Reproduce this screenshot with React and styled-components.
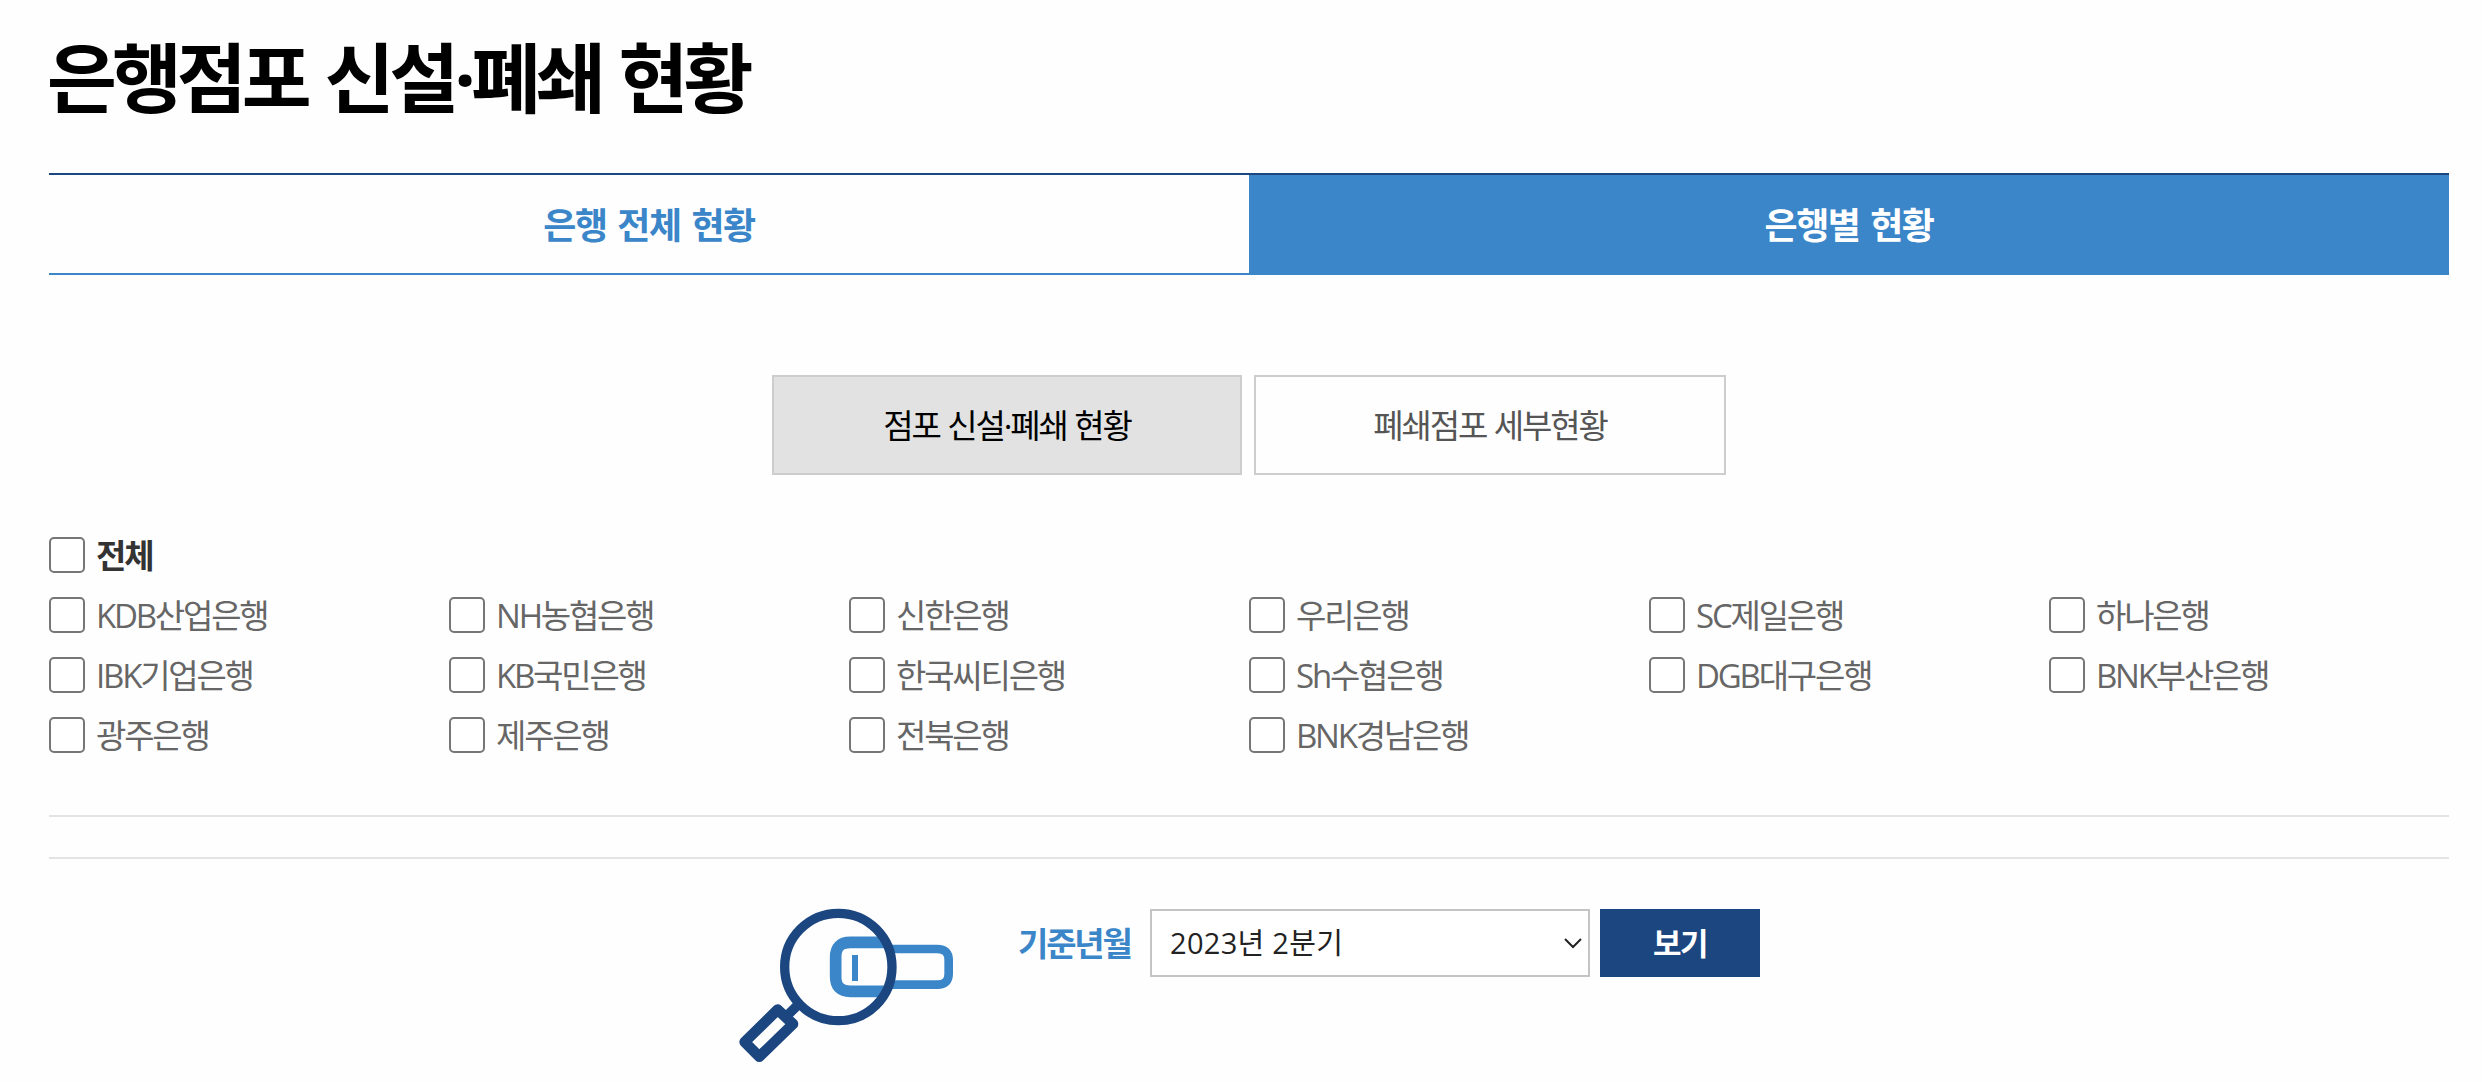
import styled, { createGlobalStyle } from "styled-components";

const GlobalStyle = createGlobalStyle`
  * {
    box-sizing: border-box;
  }

  body {
    margin: 0;
    background: #fefefe;
    font-family: "Open Sans", "Noto Sans CJK KR", sans-serif;
  }
`;

const Wrapper = styled.div`
  width: 2482px;
  height: 1082px;
  padding: 0 33px 0 49px;
  overflow: hidden;
`;

const Title = styled.h2`
  margin: 0 0 0 -2px;
  padding-top: 26px;
  height: 173px;
  font-weight: 700;
  font-size: 76px;
  line-height: 104px;
  letter-spacing: -5px;
  word-spacing: 3px;
  white-space: nowrap;
  color: #000;
`;

const Tabs = styled.div`
  display: flex;
  height: 102px;
  border-top: 2px solid #1b4680;
`;

const Tab = styled.a`
  flex: 1;
  padding-top: 2px;
  text-align: center;
  font-weight: 700;
  font-size: 36px;
  line-height: 97px;
  letter-spacing: -1.5px;
  word-spacing: 3px;
  color: ${({ $active }) => ($active ? "#fff" : "#3b86c8")};
  background: ${({ $active }) => ($active ? "#3b86c8" : "transparent")};
  border-bottom: 2px solid #3b86c8;
`;

const SubTabs = styled.div`
  display: flex;
  gap: 12px;
  padding: 100px 0 62px 723px;
`;

const SubTab = styled.a`
  width: ${({ $active }) => ($active ? "470px" : "472px")};
  height: 100px;
  border: 2px solid #cdcdcd;
  text-align: center;
  font-size: 33px;
  line-height: 97px;
  letter-spacing: -2.1px;
  word-spacing: 1px;
  color: ${({ $active }) => ($active ? "#000" : "#555")};
  background: ${({ $active }) => ($active ? "#e2e2e2" : "transparent")};
`;

const BankList = styled.div`
  display: grid;
  grid-template-columns: repeat(6, 400px);
  grid-auto-rows: 36px;
  row-gap: 24px;
  padding-bottom: 62px;
  border-bottom: 2px solid #e3e3e3;

  > label:first-child {
    grid-column: 1 / -1;
  }
`;

const Bank = styled.label`
  display: flex;
  align-items: flex-start;
  gap: 11px;
  font-weight: ${({ $all }) => ($all ? 700 : 400)};
  font-size: 33px;
  line-height: 37px;
  letter-spacing: -2.2px;
  white-space: nowrap;
  color: ${({ $all }) => ($all ? "#333" : "#666")};
`;

const Checkbox = styled.input`
  appearance: none;
  flex: none;
  width: 36px;
  height: 36px;
  margin: 0;
  border: 2px solid #767676;
  border-radius: 5px;
  background: #fff;
`;

const Search = styled.div`
  display: flex;
  align-items: flex-start;
  margin-top: 40px;
  padding: 48px 0 0 687px;
  border-top: 2px solid #e3e3e3;
`;

const SearchLabel = styled.span`
  width: 132px;
  margin-left: 62px;
  font-weight: 700;
  font-size: 33px;
  line-height: 73px;
  letter-spacing: -2.2px;
  white-space: nowrap;
  color: #3b86c8;
`;

const Select = styled.div`
  display: flex;
  align-items: center;
  justify-content: space-between;
  width: 440px;
  height: 68px;
  margin-top: 2px;
  padding: 0 5px 0 18px;
  border: 2px solid #c4c4c4;
  background: #fff;
  font-weight: 400;
  font-size: 29px;
  line-height: 64px;
  letter-spacing: 0.3px;
  color: #222;
`;

const Submit = styled.button`
  width: 160px;
  height: 68px;
  margin: 2px 0 0 10px;
  padding: 0;
  border: 0;
  background: #1b4680;
  color: #fff;
  font-family: inherit;
  font-weight: 700;
  font-size: 31px;
  line-height: 67px;
  letter-spacing: -1.5px;
`;

const banks = [
  "KDB산업은행",
  "NH농협은행",
  "신한은행",
  "우리은행",
  "SC제일은행",
  "하나은행",
  "IBK기업은행",
  "KB국민은행",
  "한국씨티은행",
  "Sh수협은행",
  "DGB대구은행",
  "BNK부산은행",
  "광주은행",
  "제주은행",
  "전북은행",
  "BNK경남은행",
];

const SearchIcon = () => (
  <svg width="220" height="160" viewBox="48 81 660 480" fill="none">
    <path
      d="M500 207H652Q686 207 686 240V281Q686 314 652 314H500"
      stroke="#3b86c8"
      strokeWidth="26"
    />
    <path
      d="M495 187H391Q347 187 347 231V290Q347 334 391 334H495"
      stroke="#3b86c8"
      strokeWidth="35"
    />
    <path d="M405 225V303" stroke="#3b86c8" strokeWidth="18" />
    <circle cx="355" cy="261" r="161" stroke="#1b4680" strokeWidth="28" />
    <path d="M239 370L200 408" stroke="#1b4680" strokeWidth="29" />
    <path
      d="M173 389L219 432L118 530L74 486Z"
      stroke="#1b4680"
      strokeWidth="32"
      strokeLinejoin="round"
    />
  </svg>
);

const App = () => {
  return (
    <>
      <GlobalStyle />
      <Wrapper>
        <Title>은행점포 신설·폐쇄 현황</Title>
        <Tabs>
          <Tab>은행 전체 현황</Tab>
          <Tab $active>은행별 현황</Tab>
        </Tabs>
        <SubTabs>
          <SubTab $active>점포 신설·폐쇄 현황</SubTab>
          <SubTab>폐쇄점포 세부현황</SubTab>
        </SubTabs>
        <BankList>
          <Bank $all>
            <Checkbox type="checkbox" />
            <span>전체</span>
          </Bank>
          {banks.map((bank) => (
            <Bank key={bank}>
              <Checkbox type="checkbox" />
              <span>{bank}</span>
            </Bank>
          ))}
        </BankList>
        <Search>
          <SearchIcon />
          <SearchLabel>기준년월</SearchLabel>
          <Select>
            <span>2023년 2분기</span>
            <svg width="20" height="12" viewBox="0 0 20 12" fill="none">
              <path d="M2 2L10 10L18 2" stroke="#222" strokeWidth="2" />
            </svg>
          </Select>
          <Submit>보기</Submit>
        </Search>
      </Wrapper>
    </>
  );
};

export default App;
